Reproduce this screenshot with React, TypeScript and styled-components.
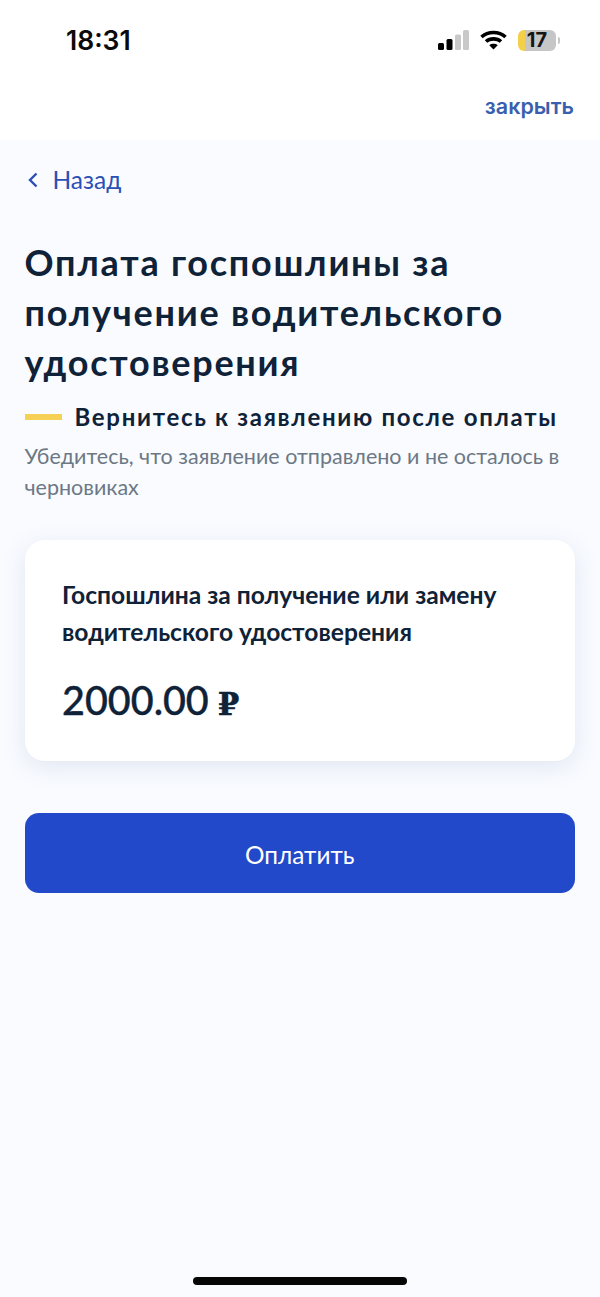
import React from "react";
import styled, { createGlobalStyle } from "styled-components";

const Global = createGlobalStyle`
  html, body { margin: 0; padding: 0; background: #f9fbff; }
  * { box-sizing: border-box; }
`;

const Page = styled.div`
  width: 600px;
  height: 1297px;
  display: flex;
  flex-direction: column;
  font-family: Lato, "Noto Sans", sans-serif;
  background: #f9fbff;
  color: #0f2238;
  overflow: hidden;
`;

const TopArea = styled.header`
  height: 140px;
  background: #ffffff;
  display: flex;
  flex-direction: column;
`;

const StatusBar = styled.div`
  height: 60px;
  padding: 20px 44px 0 66px;
  display: flex;
  align-items: center;
  justify-content: space-between;
`;

const Time = styled.span`
  font: 600 26.5px/30px Inter, sans-serif;
  color: #0a0a0a;
`;

const StatusIcons = styled.div`
  display: flex;
  align-items: center;
  gap: 11px;
`;

const Battery = styled.div`
  width: 38px;
  height: 21px;
  border-radius: 6px;
  background: linear-gradient(to right, #f4cf4a 0 7px, #c6c6c6 7px);
  display: flex;
  align-items: center;
  justify-content: center;
  font: 700 20px/21px Inter, sans-serif;
  color: #151515;
  position: relative;
  &::after {
    content: "";
    position: absolute;
    right: -4px;
    top: 7px;
    width: 2px;
    height: 7px;
    border-radius: 0 2px 2px 0;
    background: #c6c6c6;
  }
`;

const CloseRow = styled.div`
  display: flex;
  justify-content: flex-end;
  padding: 31px 26px 0 0;
`;

const CloseLink = styled.span`
  font: 600 21.5px/30px Inter, sans-serif;
  color: #3a5fae;
`;

const Content = styled.main`
  flex: 1;
  display: flex;
  flex-direction: column;
  padding: 0 24px 0 24.5px;
`;

const BackLink = styled.div`
  margin-top: 23px;
  height: 34px;
  display: flex;
  align-items: center;
  gap: 15px;
  padding-left: 3px;
  font-size: 24.5px;
  line-height: 34px;
  color: #2a50b5;
`;

const Title = styled.h1`
  margin: 40px 0 0;
  font-size: 36px;
  line-height: 50px;
  font-weight: 700;
  letter-spacing: 1.75px;
  color: #0f2238;
`;

const Notice = styled.div`
  margin-top: 12px;
  display: flex;
  align-items: center;
  gap: 13px;
`;

const NoticeDash = styled.span`
  width: 37px;
  height: 6px;
  background: #f6d155;
  flex: none;
`;

const NoticeText = styled.h2`
  margin: 0;
  font-size: 24px;
  line-height: 36px;
  font-weight: 700;
  letter-spacing: 1.7px;
  color: #0f2238;
  white-space: nowrap;
`;

const Hint = styled.p`
  margin: 6px 0 0;
  font-size: 21.5px;
  line-height: 31px;
  color: #6c7885;
`;

const Card = styled.section`
  margin-top: 37px;
  width: 550.5px;
  height: 221px;
  background: #ffffff;
  border-radius: 20px;
  box-shadow: 0 6px 24px rgba(60, 90, 150, 0.13);
  padding: 36px 37.5px 0;
`;

const CardTitle = styled.div`
  font-size: 24.6px;
  line-height: 37px;
  font-weight: 700;
  color: #0f2238;
`;

const Price = styled.div`
  margin-top: 26px;
  font-size: 39.5px;
  line-height: 48px;
  font-weight: 500;
  color: #0f2238;
  -webkit-text-stroke: 0.4px #0f2238;
`;

const Currency = styled.span`
  font-family: "DejaVu Serif", serif;
  font-size: 31px;
  font-weight: 700;
  margin-left: -1px;
`;

const PayButton = styled.button`
  margin-top: 52px;
  width: 550.5px;
  height: 80px;
  padding: 3px 0 0;
  border: none;
  border-radius: 14px;
  background: #2349cb;
  color: #ffffff;
  font: 400 24.4px/30px Lato, sans-serif;
`;

const HomeBar = styled.div`
  width: 214px;
  height: 8px;
  border-radius: 4px;
  background: #050505;
  align-self: center;
  margin-bottom: 12px;
`;

export default function App() {
  return (
    <Page>
      <Global />
      <TopArea>
        <StatusBar>
          <Time>18:31</Time>
          <StatusIcons>
            <svg width="31" height="21" viewBox="0 0 31 21" aria-hidden="true">
              <rect x="0" y="13" width="6" height="7" rx="1.5" fill="#000" />
              <rect x="8.5" y="9" width="6" height="11" rx="1.5" fill="#000" />
              <rect x="17" y="4.5" width="6" height="15.5" rx="1.5" fill="#c9c9c9" />
              <rect x="25" y="0" width="6" height="20" rx="1.5" fill="#c9c9c9" />
            </svg>
            <svg width="27" height="20" viewBox="0 0 27 20" aria-hidden="true" fill="none" stroke="#000" strokeWidth="3.6">
              <path d="M1.5 7 C8 1 19 1 25.5 7" />
              <path d="M6 11.5 C10 8 17 8 21 11.5" />
              <path d="M13.5 19.5 L9.3 15.2 C11.5 13.4 15.5 13.4 17.7 15.2 Z" fill="#000" stroke="none" />
            </svg>
            <Battery>17</Battery>
          </StatusIcons>
        </StatusBar>
        <CloseRow>
          <CloseLink>закрыть</CloseLink>
        </CloseRow>
      </TopArea>
      <Content>
        <BackLink>
          <svg width="10" height="16" viewBox="0 0 10 16" fill="none" stroke="#2a50b5" strokeWidth="2.4" aria-hidden="true">
            <path d="M8.5 1.5 L2 8 L8.5 14.5" />
          </svg>
          Назад
        </BackLink>
        <Title>
          Оплата госпошлины за
          <br />
          получение водительского
          <br />
          удостоверения
        </Title>
        <Notice>
          <NoticeDash />
          <NoticeText>Вернитесь к заявлению после оплаты</NoticeText>
        </Notice>
        <Hint>Убедитесь, что заявление отправлено и не осталось в черновиках</Hint>
        <Card>
          <CardTitle>
            Госпошлина за получение или замену
            <br />
            водительского удостоверения
          </CardTitle>
          <Price>
            2000.00 <Currency>₽</Currency>
          </Price>
        </Card>
        <PayButton>Оплатить</PayButton>
      </Content>
      <HomeBar />
    </Page>
  );
}
